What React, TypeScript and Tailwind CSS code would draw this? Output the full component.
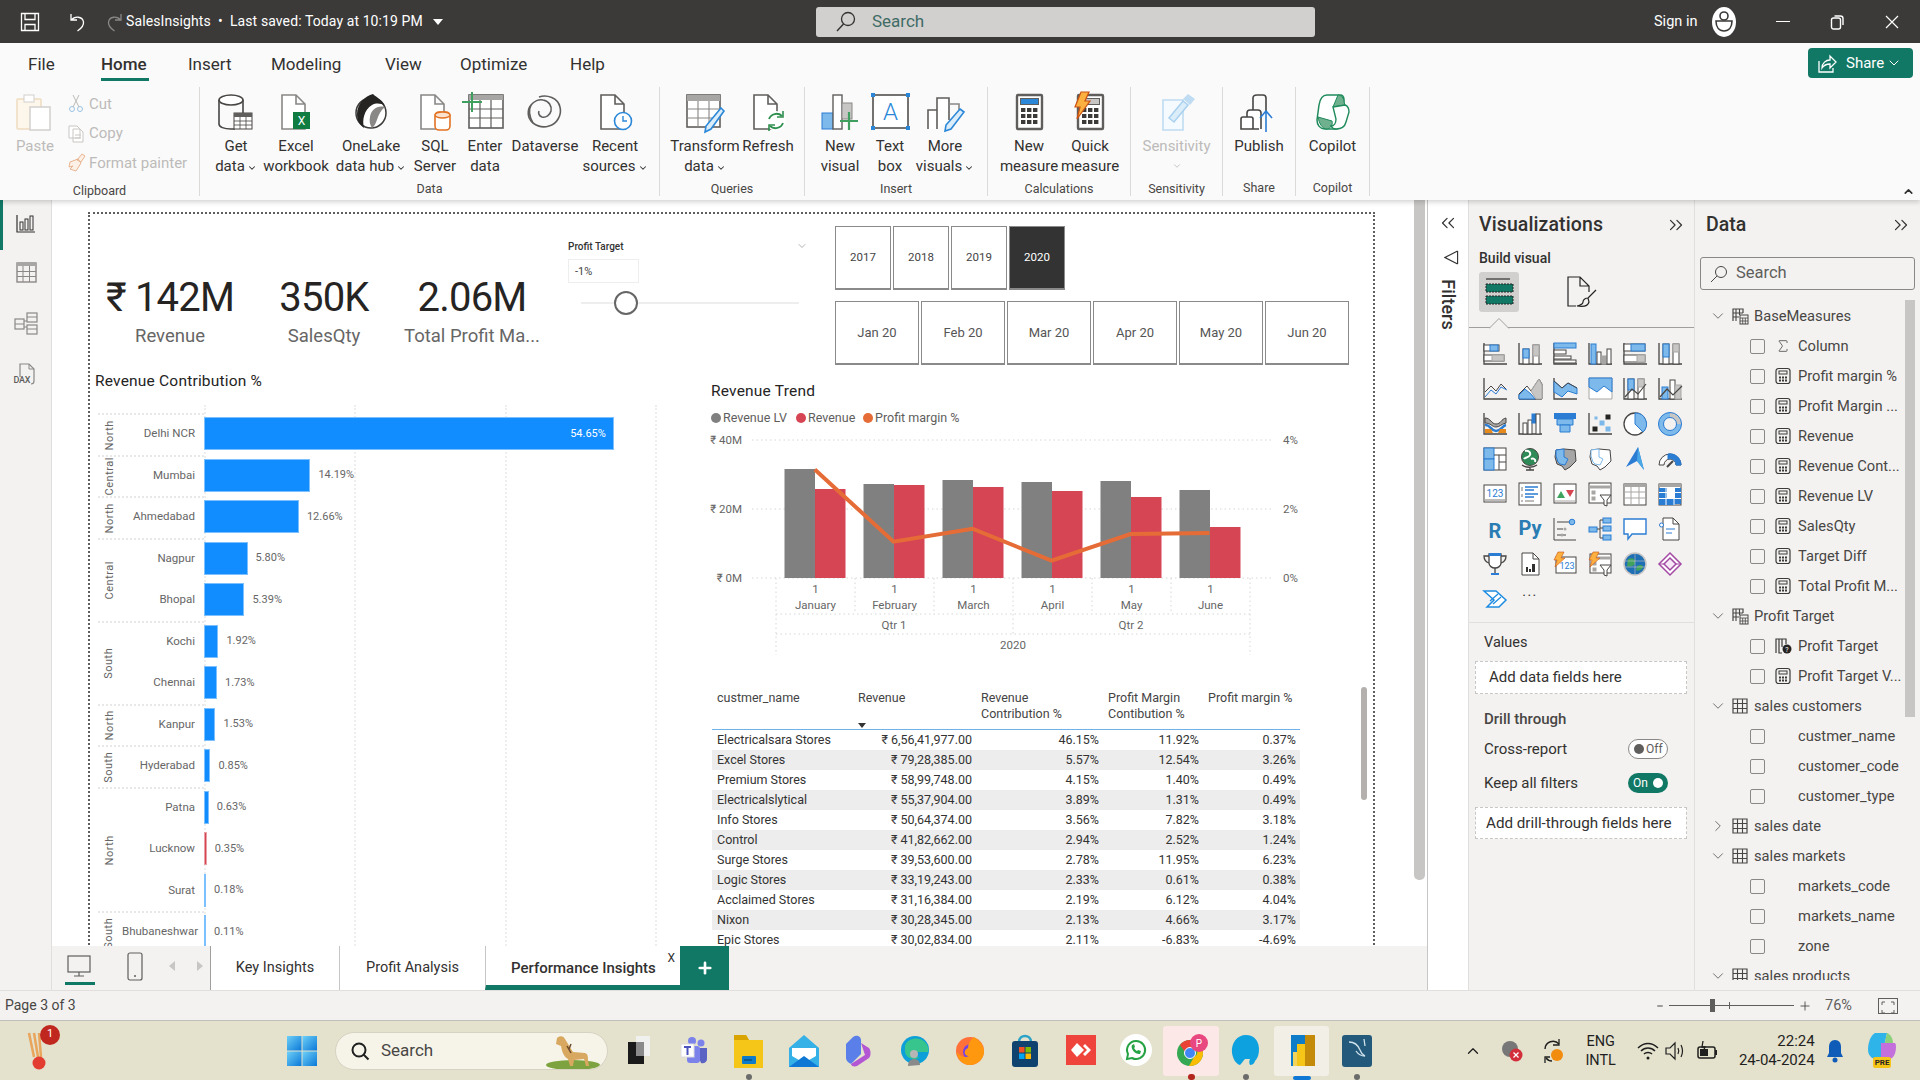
import React from 'react';
import { ChevronDown, ChevronRight, ChevronUp, ChevronsLeft, ChevronsRight, Sigma, Plus, Minus } from 'lucide-react';

const S = '#484644';
const B = '#2b7cd3';
const LB = '#7db9ea';
const G = '#a8a6a4';

const Ico = ({ s = 40, v = 40, children }: { s?: number; v?: number; children: React.ReactNode }) => (
  <svg width={s} height={s} viewBox={`0 0 ${v} ${v}`} fill="none" className="shrink-0 overflow-visible">{children}</svg>
);

const PageP = ({ c = '#605e5c', w = 1.6 }: { c?: string; w?: number }) => (
  <path d="M6 3h14l9 9v25H6zM20 3v9h9" stroke={c} strokeWidth={w} fill="#fff" />
);

const CalcI = ({ disp = '#2b88d8' }: { disp?: string }) => (
  <g>
    <rect x="8" y="3" width="25" height="34" rx="1" fill="#fff" stroke="#605e5c" strokeWidth="2.4" />
    <rect x="11.5" y="6.5" width="18" height="6" fill={disp} stroke="#605e5c" />
    {[16, 22, 28].map(y => [12, 18, 24].map(x => <rect key={`${x}${y}`} x={x} y={y} width="4.4" height="4" fill="#3b3a39" />))}
  </g>
);

const ribbonIcons: Record<string, React.ReactNode> = {
  getdata: <Ico><ellipse cx="15" cy="8" rx="12" ry="5" stroke={S} strokeWidth="1.6" fill="#fff" /><path d="M3 8v24c0 3 5 5 12 5h4" stroke={S} strokeWidth="1.6" /><path d="M27 8v13" stroke={S} strokeWidth="1.6" /><rect x="18" y="21" width="18" height="16" fill="#fff" stroke={S} /><rect x="18" y="21" width="18" height="4" fill="#605e5c" /><path d="M18 29h18M18 33h18M24 25v12M30 25v12" stroke={S} strokeWidth=".8" /></Ico>,
  excel: <Ico><PageP c="#8a8886" /><rect x="17" y="20" width="17" height="17" fill="#107c41" /><text x="25.5" y="33" fontSize="12" fill="#fff" textAnchor="middle" fontFamily="Roboto">X</text></Ico>,
  onelake: <Ico><circle cx="20" cy="21" r="15" fill="#fff" stroke="#3b3a39" strokeWidth="1.5" /><path d="M22 2c-8 2-16 10-16 20 0 7 3 11 7 14-2-8 0-18 8-23 4-2 9-2 13 1-3-7-8-8-12-12z" fill="#252423" /><path d="M34 15c-8-2-14 3-15 10-1 4 0 8 2 11 6-4 4-14 13-21z" fill="#8a8886" /></Ico>,
  sql: <Ico><PageP c="#8a8886" /><rect x="20" y="20" width="15" height="18" rx="4" fill="#fff" stroke="#e37222" strokeWidth="1.6" /><ellipse cx="27.5" cy="23" rx="7.5" ry="3" fill="#fbe2cf" stroke="#e37222" strokeWidth="1.4" /></Ico>,
  enter: <Ico><rect x="4" y="3" width="34" height="33" fill="#fff" stroke="#605e5c" strokeWidth="1.6" /><rect x="4" y="3" width="34" height="5" fill={G} /><path d="M4 17h34M4 26h34M15 8v28M26 8v28" stroke="#605e5c" strokeWidth="1.2" /><path d="M7 0v20M-3 10h20" stroke="#3f9f5f" strokeWidth="2" /></Ico>,
  dataverse: <Ico><path d="M14 5c8-3 19 1 21 10 2 8-3 17-11 19-6 2-12 0-16-3C2 26 2 18 6 13c3-4 8-6 12-5 6 1 9 6 8 11-1 4-5 7-9 6-3-1-4-4-3-6" stroke="#605e5c" strokeWidth="1.600" /><path d="M6 13c-3 6-1 13 2 18" stroke="#605e5c" strokeWidth="1.600" /></Ico>,
  recent: <Ico><PageP c="#605e5c" /><circle cx="28" cy="29" r="8.5" fill="#fff" stroke="#2b88d8" strokeWidth="1.6" /><path d="M28 24v5h4" stroke="#2b88d8" strokeWidth="1.4" /></Ico>,
  transform: <Ico><rect x="2" y="3" width="33" height="32" fill="#fff" stroke="#605e5c" strokeWidth="1.6" /><rect x="2" y="3" width="33" height="6" fill={G} /><path d="M2 17h33M2 26h33M13 9v26M24 9v26" stroke="#8a8886" strokeWidth="1.1" /><path d="M36 16l3 3-13 18-6 3 1-6z" fill="#dcedfa" stroke="#2b88d8" strokeWidth="1.6" /></Ico>,
  refresh: <Ico><PageP c="#605e5c" /><circle cx="28" cy="29" r="10" fill="#fff" /><path d="M21 27a8 8 0 0 1 13-3M35 31a8 8 0 0 1-13 3" stroke="#2f8f4e" strokeWidth="1.8" /><path d="M35 19v6h-6M21 39v-6h6" stroke="#2f8f4e" strokeWidth="1.6" /></Ico>,
  newvisual: <Ico><rect x="2" y="21" width="11" height="16" fill={LB} stroke="#2b7cd3" /><rect x="13" y="3" width="9" height="34" fill="#fff" stroke="#605e5c" strokeWidth="1.4" /><rect x="22" y="11" width="10" height="16" fill="#c8c6c4" stroke="#8a8886" /><path d="M29 20v18M20 29h18" stroke="#3f9f5f" strokeWidth="2.2" /></Ico>,
  textbox: <Ico><rect x="3" y="3" width="35" height="33" stroke="#484644" strokeWidth="1.5" fill="#fff" /><rect x="1" y="1" width="4" height="4" fill="#2b88d8" /><rect x="36" y="1" width="4" height="4" fill="#2b88d8" /><rect x="1" y="34" width="4" height="4" fill="#2b88d8" /><rect x="36" y="34" width="4" height="4" fill="#2b88d8" /><text x="20.5" y="28" fontSize="24" fill="#2b88d8" textAnchor="middle" fontFamily="Roboto" fontWeight="300">A</text></Ico>,
  more: <Ico><path d="M3 37V18h9v19M12 37V6h12v22" stroke="#605e5c" strokeWidth="1.6" fill="#fff" /><path d="M24 12h10v10" stroke="#8a8886" strokeWidth="1.6" /><path d="M35 17l4 3-13 17-6 2 1-6z" fill="#dcedfa" stroke="#2b88d8" strokeWidth="1.6" /></Ico>,
  newm: <Ico><CalcI /></Ico>,
  quickm: <Ico><CalcI disp="#c8c6c4" /><path d="M11 0h8l-4 9h5L7 27l3-12H5z" fill="#fcb040" stroke="#ca5010" strokeWidth="1.2" /></Ico>,
  sens: <Ico><path d="M6 8h20v30H6z" fill="#f4fafe" stroke="#bfdcf2" strokeWidth="1.6" /><path d="M12 26L26 9l5 4-14 17z" fill="#dbedf9" stroke="#a9d1ef" strokeWidth="1.5" /><path d="M26 7l5-5 7 5-5 6z" fill="#bfdcf2" /></Ico>,
  publish: <Ico><path d="M14 24V6c0-2 2-3 4-3h6c2 0 3 1 3 3v14" stroke="#484644" strokeWidth="1.6" /><path d="M8 37V21c0-2 1-3 3-3h8c2 0 3 1 3 3v16" stroke="#484644" strokeWidth="1.6" fill="#fff" /><path d="M2 37V27c0-1 1-2 2-2h8c1 0 2 1 2 2v10zM2 37h18" stroke="#484644" strokeWidth="1.6" fill="#fff" /><path d="M27 40V19M21 26l6-7 6 7" stroke="#2b7cd3" strokeWidth="1.6" /></Ico>,
  copilot: <Ico><path d="M14 3h13c3 0 4 2 4 5L29 30c0 4-3 7-6 7H12c-5 0-8-4-8-9l2-15c1-6 4-10 8-10z" fill="#fff" stroke="#1f8a5b" strokeWidth="1.5" /><path d="M25 3c3 0 6 3 6 7l1 3-12 2z" fill="#6fb18f" stroke="#1f8a5b" /><path d="M5 25l14 4c1 4-1 7-5 8-5 0-8-6-9-12z" fill="#6fb18f" stroke="#1f8a5b" /><path d="M20 15l12-2c3 1 4 3 4 7l-3 10c-1 4-4 7-10 7-2 0-4-1-5-3 3 0 5-3 5-7z" fill="#fff" stroke="#1f8a5b" strokeWidth="1.4" /></Ico>,
};

type RItem = { w: string; lines: string[]; chev?: boolean; icon: string; off?: boolean };
const groups: { w: string; pl: string; label: string; items: RItem[] }[] = [
  { w: 'w-[460px]', pl: 'pl-[6px]', label: 'Data', items: [
    { w: 'w-[60px]', lines: ['Get', 'data'], chev: true, icon: 'getdata' },
    { w: 'w-[60px]', lines: ['Excel', 'workbook'], icon: 'excel' },
    { w: 'w-[90px]', lines: ['OneLake', 'data hub'], chev: true, icon: 'onelake' },
    { w: 'w-[38px]', lines: ['SQL', 'Server'], icon: 'sql' },
    { w: 'w-[62px]', lines: ['Enter', 'data'], icon: 'enter' },
    { w: 'w-[58px]', lines: ['Dataverse'], icon: 'dataverse' },
    { w: 'w-[82px]', lines: ['Recent', 'sources'], chev: true, icon: 'recent' },
  ] },
  { w: 'w-[145px]', pl: 'pl-0', label: 'Queries', items: [
    { w: 'w-[90px]', lines: ['Transform', 'data'], chev: true, icon: 'transform' },
    { w: 'w-[36px]', lines: ['Refresh'], icon: 'refresh' },
  ] },
  { w: 'w-[183px]', pl: 'pl-0', label: 'Insert', items: [
    { w: 'w-[70px]', lines: ['New', 'visual'], icon: 'newvisual' },
    { w: 'w-[30px]', lines: ['Text', 'box'], icon: 'textbox' },
    { w: 'w-[80px]', lines: ['More', 'visuals'], chev: true, icon: 'more' },
  ] },
  { w: 'w-[143px]', pl: 'pl-0', label: 'Calculations', items: [
    { w: 'w-[82px]', lines: ['New', 'measure'], icon: 'newm' },
    { w: 'w-[40px]', lines: ['Quick', 'measure'], icon: 'quickm' },
  ] },
  { w: 'w-[92px]', pl: 'pl-0', label: 'Sensitivity', items: [
    { w: 'w-[92px]', lines: ['Sensitivity'], chev: true, icon: 'sens', off: true },
  ] },
  { w: 'w-[73px]', pl: 'pl-0', label: 'Share', items: [{ w: 'w-[73px]', lines: ['Publish'], icon: 'publish' }] },
  { w: 'w-[74px]', pl: 'pl-0', label: 'Copilot', items: [{ w: 'w-[74px]', lines: ['Copilot'], icon: 'copilot' }] },
];

function TitleBar() {
  return (
    <div className="h-[43px] bg-[#3b3a39] flex items-center text-white shrink-0 relative">
      <div className="ml-[20px] w-[48px]"><Ico s={20} v={20}><path d="M1.5 1.5h17v17h-17zM5 1.5v6h10v-6M5 18.5v-6h10v6" stroke="#fff" strokeWidth="1.3" /></Ico></div>
      <div className="w-[36px]"><Ico s={20} v={20}><path d="M3 2v6h6M3.5 8c3-4 11-4 12 2 .5 4-3 7-6 9" stroke="#fff" strokeWidth="1.3" /></Ico></div>
      <div className="w-[22px]"><Ico s={20} v={20}><path d="M17 2v6h-6M16.500 8c-3-4-11-4-12 2-.5 4 3 7 6 9" stroke="#8a8886" strokeWidth="1.3" /></Ico></div>
      <div className="text-[14px] tracking-[0.1px] whitespace-nowrap w-[306px]">SalesInsights&nbsp; •&nbsp; Last saved: Today at 10:19 PM</div>
      <svg width="12" height="8" viewBox="0 0 12 8"><path d="M1 1h10L6 7z" fill="#fff" /></svg>
      <div className="ml-[372px] w-[499px] h-[30px] bg-[#d2d0ce] rounded-[3px] flex items-center pl-[19px] text-[#3f6b66] text-[17px]">
        <svg width="22" height="22" viewBox="0 0 22 22" fill="none"><circle cx="13" cy="8" r="6.500" stroke="#323130" strokeWidth="1.3" /><path d="M8.500 13L2 20" stroke="#323130" strokeWidth="1.4" /></svg>
        <span className="ml-[15px]">Search</span>
      </div>
      <div className="ml-[339px] text-[14.500px] w-[58px] whitespace-nowrap">Sign in</div>
      <svg width="24" height="30" viewBox="0 0 24 30"><ellipse cx="12" cy="15" rx="12" ry="15" fill="#fff" /><circle cx="12" cy="9" r="4" fill="none" stroke="#3b3a39" strokeWidth="1.6" /><path d="M4 14h16c0 6-3 10-8 10s-8-4-8-10z" fill="none" stroke="#3b3a39" strokeWidth="1.6" /></svg>
      <div className="ml-[40px] w-[14px] h-[1.500px] bg-white" />
      <svg className="ml-[40px]" width="14" height="16" viewBox="0 0 14 16" fill="none"><rect x="1.500" y="4" width="9" height="11" rx="2" stroke="#fff" strokeWidth="1.400" /><path d="M4.500 2h6c2 0 2.500 1 2.500 2.500V11" stroke="#fff" strokeWidth="1.400" /></svg>
      <svg className="ml-[41px]" width="14" height="14" viewBox="0 0 14 14" fill="none"><path d="M1 1l12 12M13 1L1 13" stroke="#fff" strokeWidth="1.200" /></svg>
    </div>
  );
}

function Ribbon() {
  return (
    <div className="h-[157px] bg-[#fafafa] shrink-0 relative z-10 shadow-[0_2px_5px_rgba(0,0,0,0.18)] text-[#323130]">
      <div className="h-[44px] flex items-center text-[17px] relative">
        <span className="ml-[28px] w-[73px]">File</span>
        <div className="w-[87px] h-full relative flex items-center">
          <span className="font-medium">Home</span>
          <div className="absolute left-0 top-[35px] w-[48px] h-[3px] bg-[#117865]" />
        </div>
        <span className="w-[83px]">Insert</span>
        <span className="w-[114px]">Modeling</span>
        <span className="w-[75px]">View</span>
        <span className="w-[110px]">Optimize</span>
        <span>Help</span>
        <div className="absolute left-[1808px] top-[5px] w-[105px] h-[30px] rounded-[4px] bg-[#117865] text-white text-[15px] flex items-center pl-[9px]">
          <svg width="20" height="22" viewBox="0 0 20 22" fill="none"><path d="M2 9v11h14v-4" stroke="#fff" strokeWidth="1.300" /><path d="M5 16c0-5 4-8 8-8V4l6 6-6 6v-4c-4 0-6 1-8 4z" stroke="#fff" strokeWidth="1.300" /></svg>
          <span className="ml-[9px]">Share</span>
          <ChevronDown size={16} strokeWidth={1.500} className="ml-[2px]" />
        </div>
      </div>
      <div className="flex h-[110px]">
        <Group w="w-[200px]" pl="pl-0" label="Clipboard">
          <div className="w-[70px] flex flex-col items-center pt-[5px] text-[#bdbbb9] text-[15px]">
            <Ico><rect x="2" y="7" width="24" height="30" rx="1" fill="#fdf6ea" stroke="#eedcc0" strokeWidth="1.500" /><rect x="9" y="3" width="10" height="7" fill="#fff" stroke="#d2d0ce" /><rect x="15" y="15" width="20" height="23" fill="#fff" stroke="#d2d0ce" strokeWidth="1.500" /></Ico>
            <div className="h-[20px] leading-[20px] mt-[4px]">Paste</div>
          </div>
          <div className="text-[15px] text-[#bdbbb9] flex flex-col pt-[2px] -ml-[3px]">
            {[
              ['Cut', <g key="c"><circle cx="5" cy="15" r="2.500" stroke="#9cc4e4" /><circle cx="13" cy="15" r="2.500" stroke="#9cc4e4" /><path d="M6 13L12 1M12 13L6 1" stroke="#bdbbb9" /></g>],
              ['Copy', <g key="p"><path d="M2 2h8l3 3v9H2z M6 5h7l3 3v10H6z" stroke="#c8c6c4" fill="#fff" /><path d="M8 11h6M8 14h6" stroke="#c8c6c4" /></g>],
              ['Format painter', <g key="f"><path d="M10 7l5-6 3 2-4 6zM3 9l8-3 3 4-5 8c-2-1-4-1-6-2l3-3-4 1z" stroke="#e8b48f" fill="#fdf0e6" /></g>],
            ].map((r: any) => (
              <div key={r[0]} className="h-[30px] flex items-center">
                <svg width="20" height="20" viewBox="0 0 20 20" fill="none">{r[1]}</svg>
                <span className="ml-[2px] whitespace-nowrap">{r[0]}</span>
              </div>
            ))}
          </div>
        </Group>
        {groups.map(g => (
          <Group key={g.label} w={g.w} pl={g.pl} label={g.label}>
            {g.items.map(it => (
              <div key={it.lines.join()} className={`${it.w} flex flex-col items-center pt-[5px] text-[15px] ${it.off ? 'text-[#bdbbb9]' : 'text-[#323130]'}`}>
                {ribbonIcons[it.icon]}
                <div className="mt-[4px] h-[20px] leading-[20px] whitespace-nowrap flex items-center">
                  {it.lines[0]}
                </div>
                {it.lines[1] ? (
                  <div className="h-[20px] leading-[20px] whitespace-nowrap flex items-center">
                    {it.lines[1]}
                    {it.chev && <ChevronDown size={10} strokeWidth={2.500} className="ml-[2px] mt-[3px]" />}
                  </div>
                ) : it.chev ? (
                  <div className="h-[20px] flex items-center"><ChevronDown size={10} strokeWidth={2} /></div>
                ) : null}
              </div>
            ))}
          </Group>
        ))}
        <div className="flex-1 relative"><ChevronUp size={13} strokeWidth={3} className="absolute right-[5px] top-[98px] text-[#323130]" /></div>
      </div>
    </div>
  );
}

function Group({ w, pl, label, children }: { w: string; pl: string; label: string; children: React.ReactNode }) {
  return (
    <div className={`${w} h-[109px] border-r border-[#dcdad8] flex flex-col shrink-0`}>
      <div className={`flex ${pl} h-[91px]`}>{children}</div>
      <div className="text-center text-[12.500px] text-[#484644] leading-[16px] mt-[5px]">{label}</div>
    </div>
  );
}

function Rail() {
  return (
    <div className="w-[52px] shrink-0 bg-[#f3f2f1] border-r border-[#e1dfdd] flex flex-col items-center relative">
      <div className="absolute left-0 top-0 w-[3px] h-[50px] bg-[#117865]" />
      <div className="mt-[14px]"><Ico s={20} v={20}><path d="M1 1v17h18" stroke="#323130" strokeWidth="1.200" /><rect x="4" y="8" width="3" height="8" stroke="#323130" /><rect x="9" y="5" width="3" height="11" stroke="#323130" /><rect x="14" y="2" width="3" height="14" stroke="#323130" /></Ico></div>
      <div className="mt-[28px] ml-[3px]"><Ico s={22} v={22}><rect x="1" y="1" width="19" height="19" stroke="#8a8886" strokeWidth="1.400" /><rect x="1" y="1" width="19" height="3" fill="#a8a6a4" /><path d="M1 9.500h19M1 14.500h19M7 4v16M13.500 4v16" stroke="#8a8886" /></Ico></div>
      <div className="mt-[28px]"><Ico s={24} v={24}><rect x="13" y="1" width="10" height="9" stroke="#8a8886" strokeWidth="1.200" /><rect x="13" y="13" width="10" height="9" stroke="#8a8886" strokeWidth="1.200" /><rect x="1" y="7" width="9" height="10" stroke="#8a8886" strokeWidth="1.200" /><path d="M10 9h3M10 15h3M1 12h9M13 5h10M13 17h10" stroke="#8a8886" /></Ico></div>
      <div className="mt-[26px] relative w-[24px] h-[24px]">
        <Ico s={24} v={24}><path d="M6 15V2h9l5 5v12c0 2-1 3-3 3" stroke="#8a8886" strokeWidth="1.200" /><path d="M15 2v5h5" stroke="#8a8886" /></Ico>
        <span className="absolute left-0 top-[13px] text-[9px] leading-[10px] text-[#605e5c] font-medium tracking-[-0.2px]">DAX</span>
      </div>
    </div>
  );
}

const cities = [
  ['Delhi NCR', 54.65], ['Mumbai', 14.19], ['Ahmedabad', 12.66], ['Nagpur', 5.8], ['Bhopal', 5.39], ['Kochi', 1.92], ['Chennai', 1.73],
  ['Kanpur', 1.53], ['Hyderabad', 0.85], ['Patna', 0.63], ['Lucknow', 0.35], ['Surat', 0.18], ['Bhubaneshwar', 0.11],
] as [string, number][];
const zoneGroups: [string, string[]][] = [
  ['North', ['Delhi NCR']], ['Central', ['Mumbai']], ['North', ['Ahmedabad']], ['Central', ['Nagpur', 'Bhopal']], ['South', ['Kochi', 'Chennai']],
  ['North', ['Kanpur']], ['South', ['Hyderabad']], ['North', ['Patna', 'Lucknow', 'Surat']], ['South', ['Bhubaneshwar']],
];

function KPI({ w, v, l }: { w: string; v: string; l: string }) {
  return (
    <div className={`${w} shrink-0 flex flex-col items-center pt-[60px]`}>
      <div className="h-[48px] leading-[48px] text-[40px] text-[#252423] whitespace-nowrap tracking-[-0.8px]">{v}</div>
      <div className="mt-[2px] h-[24px] leading-[24px] text-[18.500px] text-[#666666] whitespace-nowrap">{l}</div>
    </div>
  );
}

function Top() {
  const yrs = ['2017', '2018', '2019', '2020'];
  const ms = ['Jan 20', 'Feb 20', 'Mar 20', 'Apr 20', 'May 20', 'Jun 20'];
  return (
    <div className="flex h-[155px] pl-[5px]">
      <KPI w="w-[150px]" v="₹ 142M" l="Revenue" />
      <KPI w="w-[158px]" v="350K" l="SalesQty" />
      <KPI w="w-[138px]" v="2.06M" l="Total Profit Ma..." />
      <div className="ml-[27px] w-[240px] shrink-0 pt-[25px]">
        <div className="flex items-center justify-between h-[14px] text-[10px] font-medium text-[#333]">
          <span>Profit Target</span>
          <ChevronDown size={12} strokeWidth={1} className="text-[#666]" />
        </div>
        <div className="mt-[6px] w-[71px] h-[24px] border border-[#eeeeee] text-[11px] leading-[24px] pl-[6px] text-[#444]">-1%</div>
        <div className="mt-[8px] ml-[13px] flex items-center h-[24px]">
          <div className="w-[33px] h-[2px] bg-[#eeeeee]" />
          <div className="w-[24px] h-[24px] rounded-full border-2 border-[#666] bg-white shrink-0" />
          <div className="w-[161px] h-[2px] bg-[#eeeeee]" />
        </div>
      </div>
      <div className="ml-[27px] pt-[12px] shrink-0">
        <div className="flex gap-[2px]">
          {yrs.map(y => (
            <div key={y} className={`w-[56px] h-[64px] flex items-center justify-center text-[11.500px] border border-b-2 border-[#8a8a8a] ${y === '2020' ? 'bg-[#333333] text-white' : 'bg-white text-[#444]'}`}>{y}</div>
          ))}
        </div>
        <div className="flex gap-[2px] mt-[11px]">
          {ms.map(m => (
            <div key={m} className="w-[84px] h-[64px] flex items-center justify-center text-[13px] text-[#555] border border-b-2 border-[#8a8a8a]">{m}</div>
          ))}
        </div>
      </div>
    </div>
  );
}

function RevenueContribution() {
  return (
    <div className="w-[621px] shrink-0">
      <div className="ml-[5px] mt-[2px] h-[20px] leading-[20px] text-[15.500px] text-[#252423] tracking-[0.2px]">Revenue Contribution %</div>
      <div className="mt-[22px] ml-[8px] flex">
        <div className="w-[106px] shrink-0">
          {zoneGroups.map((g, i) => (
            <div key={i} className="flex border-t-2 border-dotted border-[#e8e8e8]" style={{ height: g[1].length * 41.5 }}>
              <div className="w-[24px] shrink-0 flex items-center justify-center">
                <span className="-rotate-90 text-[11px] text-[#666] tracking-[0.5px] whitespace-nowrap">{g[0]}</span>
              </div>
              <div className="flex-1 flex flex-col -mt-[2px]">
                {g[1].map(c => <div key={c} className="h-[41.500px] flex items-center justify-end pr-[9px] text-[11.500px] text-[#666] whitespace-nowrap">{c}</div>)}
              </div>
            </div>
          ))}
        </div>
        <div className="flex-1 relative">
          <div className="absolute left-0 -top-[8px] bottom-[-40px] border-l-2 border-dotted border-[#eeeeee]" />
          <div className="absolute left-[150px] -top-[8px] bottom-[-40px] border-l-2 border-dotted border-[#eeeeee]" />
          <div className="absolute left-[301px] -top-[8px] bottom-[-40px] border-l-2 border-dotted border-[#eeeeee]" />
          <div className="absolute left-[451px] -top-[8px] bottom-[-40px] border-l-2 border-dotted border-[#eeeeee]" />
          {cities.map(([c, p]) => (
            <div key={c} className="h-[41.500px] flex items-center relative">
              <div className={`h-[33px] flex items-center justify-end border ${c === 'Lucknow' ? 'bg-[#d64550] border-[#e8a0a6]' : 'bg-[#118dff] border-[#7cc0ff]'}`} style={{ width: Math.max(p * 7.5, 1.5) }}>
                {p > 50 && <span className="text-[11px] text-white mr-[7px]">{p.toFixed(2)}%</span>}
              </div>
              {p < 50 && <span className="ml-[8px] text-[11px] text-[#666]">{p.toFixed(2)}%</span>}
            </div>
          ))}
        </div>
      </div>
    </div>
  );
}

function TrendChart() {
  const months = ['January', 'February', 'March', 'April', 'May', 'June'];
  const gray = [469, 484, 480, 482, 481, 490];
  const red = [489, 485, 487, 491, 497, 527];
  const T = { fontSize: 11.5, fill: '#666', fontFamily: 'Roboto' };
  const dot = { stroke: '#d6d6d6', strokeWidth: 1, strokeDasharray: '1.500 3' };
  return (
    <svg className="-ml-[11px] mt-[4px] block" width="620" height="240" viewBox="700 430 620 240" fill="none">
      {[440, 509, 578].map(y => <path key={y} d={`M752 ${y}H1274`} {...dot} />)}
      <text x="742" y="444" textAnchor="end" {...T}>₹ 40M</text>
      <text x="742" y="513" textAnchor="end" {...T}>₹ 20M</text>
      <text x="742" y="582" textAnchor="end" {...T}>₹ 0M</text>
      <text x="1283" y="444" {...T}>4%</text>
      <text x="1283" y="513" {...T}>2%</text>
      <text x="1283" y="582" {...T}>0%</text>
      {months.map((m, i) => {
        const x = 784.5 + i * 79;
        return (
          <g key={m}>
            <rect x={x} y={gray[i]} width="30.500" height={578 - gray[i]} fill="#808080" />
            <rect x={x + 30.5} y={red[i]} width="30.500" height={578 - red[i]} fill="#d64554" />
            <text x={x + 31} y="593" textAnchor="middle" {...T}>1</text>
            <text x={x + 31} y="609" textAnchor="middle" {...T}>{m}</text>
          </g>
        );
      })}
      <path d="M814.800 469.500L893.500 541.700L972.500 528.700L1051.500 560.700L1130.500 534L1209.500 533" stroke="#e66c37" strokeWidth="4" />
      {[776, 855, 934, 1013, 1092, 1171, 1250].map(x => <path key={x} d={`M${x} 578V${x === 776 || x === 1250 ? 655 : x === 1013 ? 634 : 614}`} {...dot} />)}
      <path d="M776 614H1250M776 634H1250" {...dot} />
      <text x="894" y="629" textAnchor="middle" {...T}>Qtr 1</text>
      <text x="1131" y="629" textAnchor="middle" {...T}>Qtr 2</text>
      <text x="1013" y="649" textAnchor="middle" {...T}>2020</text>
    </svg>
  );
}

const rows = [
  ['Electricalsara Stores', '₹ 6,56,41,977.00', '46.15%', '11.92%', '0.37%'],
  ['Excel Stores', '₹ 79,28,385.00', '5.57%', '12.54%', '3.26%'],
  ['Premium Stores', '₹ 58,99,748.00', '4.15%', '1.40%', '0.49%'],
  ['Electricalslytical', '₹ 55,37,904.00', '3.89%', '1.31%', '0.49%'],
  ['Info Stores', '₹ 50,64,374.00', '3.56%', '7.82%', '3.18%'],
  ['Control', '₹ 41,82,662.00', '2.94%', '2.52%', '1.24%'],
  ['Surge Stores', '₹ 39,53,600.00', '2.78%', '11.95%', '6.23%'],
  ['Logic Stores', '₹ 33,19,243.00', '2.33%', '0.61%', '0.38%'],
  ['Acclaimed Stores', '₹ 31,16,384.00', '2.19%', '6.12%', '4.04%'],
  ['Nixon', '₹ 30,28,345.00', '2.13%', '4.66%', '3.17%'],
  ['Epic Stores', '₹ 30,02,834.00', '2.11%', '-6.83%', '-4.69%'],
];

function Table() {
  return (
    <div className="mt-[20px] ml-[1px] w-[588px] text-[12.500px] text-[#333]">
      <div className="flex h-[40px] border-b border-[#6fb1e9] leading-[16px] text-[#444]">
        <div className="w-[141px] pl-[5px]">custmer_name</div>
        <div className="w-[123px] pl-[5px]">Revenue
          <svg className="mt-[17px]" width="8" height="5" viewBox="0 0 8 5"><path d="M0 0h8L4 5z" fill="#333" /></svg>
        </div>
        <div className="w-[127px] pl-[5px]">Revenue<br />Contribution %</div>
        <div className="w-[100px] pl-[5px] whitespace-nowrap">Profit Margin<br />Contibution %</div>
        <div className="w-[97px] pl-[5px] whitespace-nowrap">Profit margin %</div>
      </div>
      {rows.map((r, i) => (
        <div key={r[0]} className={`flex h-[20px] leading-[20px] ${i % 2 ? 'bg-[#ededed]' : 'bg-white'}`}>
          <div className="w-[141px] pl-[5px] whitespace-nowrap">{r[0]}</div>
          <div className="w-[123px] pr-[4px] text-right">{r[1]}</div>
          <div className="w-[127px] pr-[4px] text-right">{r[2]}</div>
          <div className="w-[100px] pr-[4px] text-right">{r[3]}</div>
          <div className="w-[97px] pr-[4px] text-right">{r[4]}</div>
        </div>
      ))}
    </div>
  );
}

function RevenueTrend() {
  return (
    <div className="flex-1 relative">
      <div className="mt-[12px] h-[20px] leading-[20px] text-[15.500px] text-[#252423] tracking-[0.2px]">Revenue Trend</div>
      <div className="mt-[9px] h-[16px] flex items-center text-[12.500px] text-[#605e5c] whitespace-nowrap">
        <span className="w-[10px] h-[10px] rounded-full bg-[#808080]" /><span className="ml-[2px] w-[73px]">Revenue LV</span>
        <span className="w-[10px] h-[10px] rounded-full bg-[#d64554]" /><span className="ml-[2px] w-[55px]">Revenue</span>
        <span className="w-[10px] h-[10px] rounded-full bg-[#e66c37]" /><span className="ml-[2px]">Profit margin %</span>
      </div>
      <TrendChart />
      <Table />
      <div className="absolute left-[650px] top-[318px] w-[6px] h-[113px] rounded-[3px] bg-[#b3b0ad]" />
    </div>
  );
}

function Canvas() {
  return (
    <div className="h-[746px] overflow-hidden relative bg-white pl-[36px] pt-[12px]">
      <div className="w-[1287px] h-[900px] border-2 border-dotted border-[#605e5c] bg-white">
        <Top />
        <div className="flex">
          <RevenueContribution />
          <RevenueTrend />
        </div>
      </div>
      <div className="absolute right-[2px] top-0 w-[11px] h-[680px] rounded-b-[5px] bg-[#c8c6c4]" />
    </div>
  );
}

function Tabs() {
  return (
    <div className="h-[44px] bg-[#f3f2f1] flex items-stretch text-[14.500px] shrink-0 text-[#323130]">
      <div className="w-[159px] flex items-start relative border-r border-[#a19f9d]">
        <div className="ml-[15px] mt-[8px] relative">
          <Ico s={24} v={24}><rect x="1" y="2" width="22" height="16" stroke="#605e5c" strokeWidth="1.200" fill="#f3f2f1" /><path d="M12 18v4M7 22h10" stroke="#605e5c" strokeWidth="1.200" /></Ico>
        </div>
        <div className="absolute left-[13px] top-[36px] w-[30px] h-[3px] bg-[#117865]" />
        <svg className="ml-[36px] mt-[6px] shrink-0" width="16" height="29" viewBox="0 0 16 29" fill="none"><rect x="1" y="1" width="14" height="27" rx="2" stroke="#605e5c" strokeWidth="1.200" /><circle cx="8" cy="24" r="1" fill="#605e5c" /></svg>
        <svg className="ml-[26px] mt-[15px]" width="6" height="10" viewBox="0 0 6 10"><path d="M6 0v10L0 5z" fill="#c8c6c4" /></svg>
        <svg className="ml-[22px] mt-[15px]" width="6" height="10" viewBox="0 0 6 10"><path d="M0 0v10l6-5z" fill="#c8c6c4" /></svg>
      </div>
      <div className="w-[129px] bg-white border-r border-[#c8c6c4] flex items-center justify-center">Key Insights</div>
      <div className="w-[145px] bg-white flex items-center justify-center">Profit Analysis</div>
      <div className="w-[195px] bg-white border-b-[5px] border-[#117865] border-l border-l-[#c8c6c4] flex items-center relative pl-[25px] pt-[5px] font-medium text-[15px] whitespace-nowrap">
        Performance Insights
        <span className="absolute right-[5px] top-[3px] text-[12px] font-normal">X</span>
      </div>
      <div className="w-[49px] bg-[#117865] flex items-center justify-center text-white"><Plus size={18} strokeWidth={3.500} /></div>
    </div>
  );
}

function Filters() {
  return (
    <div className="w-[41px] shrink-0 bg-white border-l border-[#c8c6c4] flex flex-col items-center relative">
      <ChevronsLeft size={22} strokeWidth={1.300} className="mt-[12px] text-[#323130]" />
      <svg className="mt-[16px] ml-[6px]" width="15" height="15" viewBox="0 0 16 16" fill="none"><path d="M14.500 1v14M14.500 1L1 8l13.500 7" stroke="#323130" strokeWidth="1.200" /></svg>
      <div className="mt-[12px] h-[54px] text-[18px] font-medium text-[#323130] flex items-center justify-center">
        <span className="rotate-90 inline-block">Filters</span>
      </div>
    </div>
  );
}

const Axis = () => <path d="M1 1v21h23" stroke={S} strokeWidth="1.300" />;
const R = (x: number, y: number, w: number, h: number, f = '#fff', st = S) => <rect x={x} y={y} width={w} height={h} fill={f} stroke={st} strokeWidth="1" />;

const vizIcons: React.ReactNode[] = [
  <><Axis />{R(1, 3, 15, 6)}{R(7, 3, 8, 6, LB, B)}{R(1, 13, 20, 6)}{R(9, 13, 12, 6, '#c8c6c4', G)}</>,
  <><Axis />{R(5, 7, 6, 15)}{R(5, 7, 6, 9, LB, B)}{R(15, 3, 6, 19)}{R(15, 3, 6, 11, '#c8c6c4', G)}</>,
  <><Axis />{R(1, 1, 22, 5, LB, B)}{R(1, 8, 12, 4)}{R(1, 14, 17, 3)}{R(1, 18, 22, 3)}</>,
  <><Axis />{R(3, 2, 5, 20, LB, B)}{R(9, 10, 4, 12, '#fff')}{R(14, 14, 4, 8, G, G)}{R(19, 7, 4, 15)}</>,
  <><Axis />{R(1, 2, 21, 7)}{R(8, 2, 14, 7, LB, B)}{R(1, 13, 21, 7)}{R(14, 13, 8, 7, '#c8c6c4', G)}</>,
  <><Axis />{R(5, 2, 6, 20)}{R(5, 2, 6, 13, LB, B)}{R(15, 2, 6, 20)}{R(15, 2, 6, 8, '#c8c6c4', G)}</>,
  <><Axis /><path d="M2 15l6-6 5 5 5-7 5 5" stroke={S} /><path d="M2 20l6-7 5 4 5-7 6 3" stroke={B} /></>,
  <><path d="M1 22h23" stroke={S} strokeWidth="1.300" /><path d="M1 22V17L9 9l4 5 8-12 3 5v15z" fill="#fff" stroke={S} /><path d="M13 14l8-12 3 6v14h-6z" fill="#c8c6c4" stroke={G} /><path d="M1 22v-4l6-6 6 5 4 5z" fill={LB} stroke={B} /></>,
  <><Axis /><path d="M1 4l8 7 6-5 9 5v6l-9-3-6 6-8-5z" fill={LB} stroke={B} /><path d="M1 4l8 7 6-5 9 5" stroke={S} /></>,
  <><path d="M1 1h23v21H1z" fill="#fff" stroke={G} /><path d="M1 1h23v14l-8-6-7 6-8-5z" fill={LB} stroke={B} /></>,
  <><Axis />{R(5, 2, 6, 20)}{R(5, 2, 6, 11, LB, B)}{R(15, 2, 6, 20)}{R(15, 2, 6, 8, '#c8c6c4', G)}<path d="M2 20l7-8 6 5 8-10" stroke={S} strokeWidth="1.200" /></>,
  <><Axis />{R(4, 10, 6, 12, LB, B)}{R(12, 3, 5, 19)}{R(17, 8, 6, 14, '#c8c6c4', G)}<path d="M2 20l7-8 6 6 9-9" stroke={S} strokeWidth="1.200" /></>,
  <><Axis /><path d="M2 6c6 0 6 6 11 6s5-5 10-6v5c-5 1-6 4-10 4S8 11 2 11z" fill={G} stroke={S} /><path d="M2 13c5-1 6 6 11 6s6-5 10-6" stroke={B} strokeWidth="2.500" /><path d="M2 17h6l2 4H2zM17 17h6v4h-8z" fill="#e8891c" /></>,
  <><Axis />{R(5, 11, 4, 11)}{R(10, 8, 4, 14)}{R(14, 2, 4, 9, B, B)}{R(18, 2, 4, 20)}</>,
  <><path d="M1 1h22v6H1z" fill={B} /><path d="M4 7h16v6H4z" fill={LB} stroke={B} /><path d="M7 13h10v7H7z" fill={LB} stroke={B} /></>,
  <><Axis />{R(5, 15, 4, 4, '#252423', '#252423')}{R(12, 9, 4, 4, LB, LB)}{R(18, 3, 4, 4, '#252423', '#252423')}{R(18, 15, 4, 4, LB, LB)}{R(7, 5, 2, 2, LB, LB)}</>,
  <><circle cx="12" cy="12" r="11" fill="#fff" stroke={S} strokeWidth="1.300" /><path d="M12 12V1a11 11 0 0 1 8 19z" fill={LB} stroke={B} /></>,
  <><circle cx="12" cy="12" r="9" stroke={LB} strokeWidth="5" /><path d="M12 3a9 9 0 0 1 9 9" stroke="#c8c6c4" strokeWidth="5" /><circle cx="12" cy="12" r="11.500" stroke={B} /><circle cx="12" cy="12" r="6.500" stroke={B} /></>,
  <>{R(1, 1, 22, 22)}{R(1, 1, 10, 11, LB, B)}{R(1, 12, 10, 11, LB, B)}<path d="M11 8h12M16 8v15M16 15h7" stroke={S} /></>,
  <><circle cx="12" cy="10" r="8.500" fill="#2e8b57" stroke={S} /><path d="M7 4c3-1 6 1 5 4s-5 2-6 4M13 12c2-1 5 0 4 3" stroke="#fff" strokeWidth="2" /><path d="M4 18c4 3 11 3 15 0M12 20v3M8 23h8" stroke={S} strokeWidth="1.300" /></>,
  <><path d="M3 3l8-1 11 1 1 11-6 6-5 3-3-4-5-2-2-7z" fill="#a6a6a6" stroke={S} /><path d="M3 3l8-1v8l4 2-3 6-5-1-2-2-2-6z" fill={LB} stroke={B} /></>,
  <><path d="M3 3l8-1 11 1 1 11-6 6-5 3-3-4-5-2-2-7z" fill="#fff" stroke={S} /><path d="M3 3l8-1v8l4 2-3 6-5-1-2-2-2-6z" fill="#fff" stroke={LB} /></>,
  <><path d="M15 0L3 20l11-6 7 9z" fill={B} /><path d="M15 0l-1 14 7 9z" fill="#4aa8e6" /></>,
  <><path d="M1 18A11 11 0 0 1 23 18h-5a6 6 0 0 0-12 0z" fill="#fff" stroke={S} /><path d="M10 7a11 11 0 0 1 13 11h-5a6 6 0 0 0-8-6z" fill={B} stroke={B} /><path d="M9 20l6-6" stroke={S} strokeWidth="2" /></>,
  <><rect x="1" y="3" width="22" height="17" fill="#fff" stroke={S} /><path d="M2 18h20" stroke={G} strokeWidth="1.500" /><text x="12" y="15" fontSize="10" textAnchor="middle" fill={B} fontFamily="Roboto">123</text></>,
  <>{R(1, 1, 22, 22)}<path d="M4 5v4M4 12v3M4 18v2" stroke={G} strokeWidth="1.500" /><path d="M7 5h13M7 8h9M7 12h13M7 15h9" stroke={B} strokeWidth="1.500" /><path d="M7 19h9" stroke={G} strokeWidth="1.500" /></>,
  <>{R(1, 2, 22, 19)}<path d="M4 16l4-7 4 7z" fill="#3fa35e" /><path d="M13 8h8l-4 7z" fill="#d64550" /><path d="M2 19h20" stroke={G} /></>,
  <>{R(1, 1, 22, 20)}<path d="M1 5h22" stroke={G} strokeWidth="3" />{R(4, 9, 3, 3, G, G)}{R(4, 15, 3, 3, G, G)}<path d="M12 13h11l-4 5v6l-3-1v-5z" fill="#fff" stroke={S} /></>,
  <>{R(1, 2, 22, 21)}<path d="M1 3.500h22" stroke={G} strokeWidth="3" /><path d="M1 10h22M1 16h22M8 5v18M16 5v18" stroke={G} /></>,
  <>{R(1, 2, 22, 21)}<path d="M1 3.500h22" stroke={G} strokeWidth="3" /><path d="M1 6h8v11H1zM17 6h6v16h-6zM1 17h16v6H1z" fill={B} /><path d="M1 10.500h22M1 16.500h22M8 5v18M16 5v18" stroke="#fff" /></>,
  <text x="12" y="21" fontSize="20" fontWeight="700" fill="#2b7cb3" textAnchor="middle" fontFamily="Roboto">R</text>,
  <text x="12" y="18" fontSize="20" fontWeight="700" fill="#2b7cb3" textAnchor="middle" fontFamily="Roboto">Py</text>,
  <><path d="M1 1v22h22M4 5h13M4 12h6M4 18h9" stroke={S} /><circle cx="19" cy="5" r="2.800" fill={LB} stroke={B} /><circle cx="12" cy="12" r="1.500" fill={G} /><circle cx="9" cy="18" r="1.500" fill={G} /></>,
  <><rect x="1" y="10" width="8" height="5" fill={LB} stroke={B} />{R(15, 1, 8, 5, LB, B)}{R(15, 9, 8, 5, LB, B)}{R(15, 18, 8, 5, LB, B)}<path d="M9 12h3M12 3v18M12 3h3M12 11h3M12 21h3" stroke={S} /></>,
  <path d="M1 2h22v15H9l-4 5v-5H1z" fill="#fff" stroke={B} strokeWidth="1.400" />,
  <><path d="M5 1h10l6 6v16H5z" fill="#fff" stroke={S} /><path d="M15 1v6h6" stroke={S} /><circle cx="3.500" cy="8" r="2" fill="#fff" stroke={B} /><path d="M8 12h9M8 16h6" stroke={B} /></>,
  <><path d="M6 2h12v9c0 3-3 5-6 5s-6-2-6-5z" fill="#fff" stroke={S} strokeWidth="1.300" /><path d="M6 1h12v3H6zM8 21h8v2H8z" fill={B} /><path d="M6 4H1c0 4 2 6 5 7M18 4h5c0 4-2 6-5 7M12 16v5" stroke={S} strokeWidth="1.300" /></>,
  <><path d="M4 1h11l6 6v16H4z" fill="#fff" stroke={S} /><path d="M15 1v6h6" stroke={S} /><path d="M8 20v-5h2v5zM11 20v-3h2v3zM14 20v-8h3v8z" fill="#323130" /></>,
  <><rect x="3" y="5" width="20" height="16" fill="#fff" stroke={S} /><text x="14" y="17" fontSize="9" textAnchor="middle" fill={B} fontFamily="Roboto">123</text><path d="M5 0h6L8 6h4L2 15l2-7H1z" fill="#fcb040" stroke="#ca5010" strokeWidth=".6" /></>,
  <>{R(2, 2, 21, 19)}<path d="M2 6h21" stroke={G} strokeWidth="3" />{R(5, 10, 3, 3, G, G)}{R(5, 16, 3, 3, G, G)}<path d="M12 13h11l-4 5v6l-3-1v-5z" fill="#fff" stroke={S} /><path d="M5 0h6L8 6h4L2 15l2-7H1z" fill="#fcb040" stroke="#ca5010" strokeWidth=".6" /></>,
  <><circle cx="12" cy="12" r="11" fill="#1f6fb5" stroke="#c8c6c4" strokeWidth="1.500" /><path d="M5 7c4-2 8 0 7 4s-6 4-8 3zM14 14c3-2 6-1 6 1s-5 5-7 3z" fill="#3fa35e" /><path d="M2 9h20M2 15h20M12 1v22" stroke="#c8c6c4" strokeWidth=".6" /></>,
  <><path d="M12 1l11 11-11 11L1 12z" stroke="#a349a4" strokeWidth="1.500" fill="#fff" /><path d="M12 6l6 6-6 6-6-6z" stroke="#a349a4" strokeWidth="1.500" fill="#f6e8f6" /><path d="M1 12h5M18 12h5" stroke="#a349a4" /></>,
  <><path d="M1 4h12l10 9-7 7H4l7-7z" fill="#fff" stroke="#1f8ce0" strokeWidth="1.500" /><path d="M7 14l8-7M10 17l8-7" stroke="#1f8ce0" strokeWidth="1.300" /></>,
  <text x="12" y="14" fontSize="14" fill="#323130" textAnchor="middle" fontFamily="Roboto" letterSpacing="1.500">···</text>,
];

function Toggle({ on }: { on?: boolean }) {
  return on ? (
    <div className="w-[40px] h-[20px] rounded-full bg-[#117865] text-white text-[12px] flex items-center pl-[5px] relative">On<span className="absolute right-[5px] top-[5px] w-[10px] h-[10px] bg-white rounded-full" /></div>
  ) : (
    <div className="w-[40px] h-[20px] rounded-full border border-[#8a8886] bg-white text-[#605e5c] text-[12px] flex items-center pl-[5px]"><span className="w-[10px] h-[10px] rounded-full bg-[#605e5c] mr-[2px]" />Off</div>
  );
}

function Viz() {
  return (
    <div className="w-[227px] shrink-0 bg-[#f3f2f1] border-l border-r border-[#e1dfdd] relative text-[#323130]">
      <div className="mt-[12px] ml-[10px] h-[26px] flex items-center justify-between pr-[7px]">
        <span className="text-[19.500px] font-medium tracking-[0.1px]">Visualizations</span>
        <ChevronsRight size={22} strokeWidth={1.300} />
      </div>
      <div className="mt-[11px] ml-[10px] h-[18px] leading-[18px] text-[14px] font-medium">Build visual</div>
      <div className="mt-[5px] ml-[10px] flex items-center">
        <div className="w-[40px] h-[40px] rounded-[3px] bg-[#d2d0ce] flex items-center justify-center">
          <Ico s={30} v={30}><path d="M2 2h24" stroke="#323130" strokeWidth="1.200" /><rect x="2" y="7" width="27" height="8" fill="#117865" stroke="#252423" strokeDasharray="2 1" /><rect x="2" y="19" width="27" height="8" fill="#117865" stroke="#252423" strokeDasharray="2 1" /></Ico>
        </div>
        <div className="ml-[47px]"><Ico s={32} v={32}><path d="M10 30H2V1h12l9 9v6M14 1v9h9" stroke="#252423" strokeWidth="1.200" /><path d="M22 22L30 14M22 22c-3 0-5 2-5 4 0 2-2 3-6 4 6 1 11 0 12-4z" stroke="#252423" strokeWidth="1.200" /></Ico></div>
      </div>
      <div className="mt-[15px] border-t border-[#a19f9d] relative">
        <svg className="absolute left-[20px] -top-[10px]" width="22" height="11" viewBox="0 0 22 11" fill="none"><path d="M0 10.500L10 .5l10 10" stroke="#a19f9d" fill="#f3f2f1" /></svg>
      </div>
      <div className="mt-[8px] ml-[8px] grid grid-cols-[repeat(6,35px)] auto-rows-[35px]">
        {vizIcons.map((ic, i) => <div key={i} className="flex items-center justify-center"><Ico s={24} v={24}>{ic}</Ico></div>)}
      </div>
      <div className="mt-[6px] border-t border-[#e1dfdd]" />
      <div className="mt-[10px] ml-[15px] h-[20px] leading-[20px] text-[14.500px]">Values</div>
      <div className="mt-[8px] ml-[6px] w-[212px] h-[33px] bg-white border border-dashed border-[#c8c6c4] text-[15px] leading-[31px] pl-[13px]">Add data fields here</div>
      <div className="mt-[15px] ml-[15px] h-[20px] leading-[20px] text-[15px] font-medium text-[#484644]">Drill through</div>
      <div className="mt-[10px] ml-[15px] w-[184px] flex items-center justify-between h-[20px] text-[15px]"><span>Cross-report</span><Toggle /></div>
      <div className="mt-[14px] ml-[15px] w-[184px] flex items-center justify-between h-[20px] text-[15px]"><span>Keep all filters</span><Toggle on /></div>
      <div className="mt-[14px] ml-[6px] w-[212px] h-[32px] bg-white border border-dashed border-[#c8c6c4] text-[15.200px] leading-[30px] pl-[10px] whitespace-nowrap">Add drill-through fields here</div>
    </div>
  );
}

const TableIco = ({ calc }: { calc?: boolean }) => (
  <Ico s={18} v={18}>
    <path d={calc ? 'M2 14V2h10v4' : 'M2 2h14v14H2z'} stroke="#484644" strokeWidth="1.200" />
    <path d={calc ? 'M2 6h10M2 10h6M5 2v12M8.500 2v6' : 'M2 6.500h14M2 11.500h14M6.500 2v14M11.500 2v14'} stroke="#484644" strokeWidth="1.100" />
    {calc && <><rect x="9" y="8" width="8" height="9" fill="#f3f2f1" stroke="#484644" /><path d="M9 11h8M9 14h8M11.700 11v6M14.300 11v6" stroke="#484644" strokeWidth=".8" /></>}
  </Ico>
);
const CalcSmall = () => (
  <Ico s={16} v={16}>
    <rect x="1" y="0.500" width="14" height="15" rx="2.500" stroke="#3b3a39" strokeWidth="1.200" fill="#f3f2f1" />
    <rect x="4" y="3" width="8" height="3" stroke="#3b3a39" />
    {[8.5, 11.5].map(y => [4, 7, 10].map(x => <rect key={`${x}${y}`} x={x} y={y} width="2" height="2" fill="#3b3a39" />))}
  </Ico>
);

type Node = { t: string; k: 'g' | 'gc' | 'gr' | 'c' | 'n' | 'sig' | 'q' };
const nodes: Node[] = [
  { t: 'BaseMeasures', k: 'gc' }, { t: 'Column', k: 'sig' }, { t: 'Profit margin %', k: 'c' }, { t: 'Profit Margin ...', k: 'c' }, { t: 'Revenue', k: 'c' }, { t: 'Revenue Cont...', k: 'c' }, { t: 'Revenue LV', k: 'c' }, { t: 'SalesQty', k: 'c' }, { t: 'Target Diff', k: 'c' }, { t: 'Total Profit M...', k: 'c' },
  { t: 'Profit Target', k: 'gc' }, { t: 'Profit Target', k: 'q' }, { t: 'Profit Target V...', k: 'c' },
  { t: 'sales customers', k: 'g' }, { t: 'custmer_name', k: 'n' }, { t: 'customer_code', k: 'n' }, { t: 'customer_type', k: 'n' },
  { t: 'sales date', k: 'gr' }, { t: 'sales markets', k: 'g' }, { t: 'markets_code', k: 'n' }, { t: 'markets_name', k: 'n' }, { t: 'zone', k: 'n' }, { t: 'sales products', k: 'g' },
];

function DataPane() {
  return (
    <div className="flex-1 bg-[#f3f2f1] relative text-[#484644]">
      <div className="mt-[12px] ml-[11px] h-[26px] flex items-center justify-between pr-[8px]">
        <span className="text-[19.500px] font-medium text-[#323130]">Data</span>
        <ChevronsRight size={22} strokeWidth={1.300} className="text-[#323130]" />
      </div>
      <div className="mt-[19px] ml-[5px] w-[215px] h-[33px] border border-[#8a8886] rounded-[3px] flex items-center pl-[9px] text-[16.500px] text-[#605e5c]">
        <svg width="18" height="18" viewBox="0 0 18 18" fill="none"><circle cx="11" cy="7" r="5.500" stroke="#484644" /><path d="M7 11l-6 6" stroke="#484644" /></svg>
        <span className="ml-[8px]">Search</span>
      </div>
      <div className="mt-[11px] h-[679px] overflow-hidden text-[14.700px]">
        {nodes.map((n, i) => {
          const isG = n.k === 'g' || n.k === 'gc' || n.k === 'gr';
          return isG ? (
            <div key={i} className="h-[30px] flex items-center pl-[14px]">
              {n.k === 'gr' ? <ChevronRight size={18} strokeWidth={1} /> : <ChevronDown size={18} strokeWidth={1} />}
              <div className="ml-[4px]"><TableIco calc={n.k === 'gc'} /></div>
              <span className="ml-[5px] whitespace-nowrap">{n.t}</span>
            </div>
          ) : (
            <div key={i} className="h-[30px] flex items-center pl-[55px]">
              <div className="w-[15px] h-[15px] rounded-[2px] border border-[#8a8886] bg-[#f3f2f1] shrink-0" />
              <div className="ml-[10px] w-[16px] h-[16px] flex items-center justify-center">
                {n.k === 'c' && <CalcSmall />}
                {n.k === 'sig' && <Sigma size={16} strokeWidth={1.200} />}
                {n.k === 'q' && <Ico s={16} v={16}><path d="M1 15V1h10v5M4 1v14h3M7 1v8" stroke="#3b3a39" strokeWidth="1.200" /><circle cx="12" cy="11" r="4.500" fill="#252423" /><text x="12" y="14" fontSize="7" fill="#fff" textAnchor="middle" fontFamily="Roboto">?</text></Ico>}
              </div>
              <span className="ml-[7px] whitespace-nowrap">{n.t}</span>
            </div>
          );
        })}
      </div>
      <div className="absolute left-[210px] top-[100px] w-[10px] h-[417px] bg-[#c8c6c4]" />
    </div>
  );
}

function Status() {
  return (
    <div className="h-[31px] bg-[#f3f2f1] border-t border-[#e1dfdd] border-b border-b-[#c0bfbb] flex items-center text-[14px] text-[#484644] shrink-0">
      <span className="ml-[5px]">Page 3 of 3</span>
      <div className="ml-auto flex items-center">
        <Minus size={8} strokeWidth={3} />
        <div className="ml-[5px] w-[125px] h-[1px] bg-[#605e5c] relative">
          <div className="absolute left-[41px] -top-[6px] w-[5px] h-[13px] bg-[#605e5c]" />
          <div className="absolute left-[60px] -top-[3px] w-[1px] h-[7px] bg-[#605e5c]" />
        </div>
        <Plus size={14} strokeWidth={1.500} className="ml-[4px]" />
        <span className="ml-[13px] w-[36px] text-[#605e5c] text-[14.500px]">76%</span>
        <div className="ml-[17px] mr-[22px] w-[20px] h-[16px] border border-[#605e5c] bg-[#f3f2f1]">
          <Ico s={18} v={18}><path d="M3 6V3h3M12 3h3v3M15 11v3h-3M6 14H3v-3" stroke="#605e5c" /></Ico>
        </div>
      </div>
    </div>
  );
}

const tb: { k: string; n: React.ReactNode; dot?: string; bg?: string }[] = [
  { k: 'a', n: <><rect x="6" y="8" width="16" height="22" fill="#1a1a1a" /><rect x="14" y="2" width="14" height="20" fill="#f0f0ee" /><rect x="14" y="8" width="8" height="14" fill="#8a8a8a" /></> },
  { k: 'b', n: <><circle cx="24" cy="9" r="3.500" fill="#7b83eb" /><path d="M18 14h12v11c0 3-3 5-6 4z" fill="#5a62c3" /><circle cx="15" cy="7" r="4" fill="#7b83eb" /><rect x="10" y="12" width="13" height="17" rx="3" fill="#7b83eb" /><rect x="4" y="10" width="13" height="13" fill="#fff" stroke="#ddd" /><path d="M7 13h7M10.500 13v8" stroke="#4b53bc" strokeWidth="2" /></> },
  { k: 'c', dot: 'g', n: <><path d="M1 1h12l3 5h14v28H1z" fill="#f5c518" /><path d="M1 1h12l3 5H1z" fill="#d9a300" /><rect x="9" y="22" width="14" height="8" rx="1" fill="#0f7cc9" /><rect x="11" y="25" width="8" height="2" fill="#0a5a96" /></> },
  { k: 'd', n: <><path d="M1 14L16 1l15 13v19H1z" fill="#35b1e8" /><path d="M4 14h24v8l-12 7-12-7z" fill="#fff" /><path d="M1 33l15-11 15 11z" fill="#0f78d4" /></> },
  { k: 'e', n: <><path d="M10 3c4-3 8 0 8 3v14L8 30c-2-1-5-3-5-6V10z" fill="#5b7fe8" /><path d="M18 9l8 5c2 2 2 8 0 10L14 32c-3 1-6 0-6-2l14-9z" fill="#b356d3" /></> },
  { k: 'f', n: <><circle cx="16" cy="16" r="14" fill="#0c9fd8" /><path d="M6 12c2-8 14-10 20-4 3 3 4 7 3 10H13c0 4 5 6 8 5-4 4-15 2-15-6z" fill="#37c48d" /><circle cx="15" cy="20" r="4" fill="#b6b6b6" /><path d="M9 32c0-5 3-7 6-7s6 2 6 6z" fill="#8a8a8a" /></> },
  { k: 'g', n: <><circle cx="16" cy="17" r="14" fill="#ff7139" /><circle cx="17" cy="18" r="8" fill="#7542e5" /><path d="M20 3c5 3 10 8 10 15S23 31 16 31C9 31 3 25 3 18c3 5 8 6 12 4-6 0-5-7-1-8 0-4 2-8 6-11z" fill="#ff980e" /></> },
  { k: 'h', n: <><path d="M10 8c0-8 12-8 12 0" stroke="#2ba3c8" strokeWidth="2.500" /><rect x="3" y="7" width="26" height="26" rx="3" fill="#10426f" /><rect x="10" y="13" width="5.500" height="5.500" fill="#f25022" /><rect x="16.500" y="13" width="5.500" height="5.500" fill="#7fba00" /><rect x="10" y="19.500" width="5.500" height="5.500" fill="#00a4ef" /><rect x="16.500" y="19.500" width="5.500" height="5.500" fill="#ffb900" /></> },
  { k: 'i', n: <><rect x="1" y="1" width="30" height="30" fill="#ef443b" /><path d="M12 9l7 7-7 7-6-7z" fill="#fff" /><path d="M20 10l6 6-6 6-2-2 4-4-4-4z" fill="#fff" /></> },
  { k: 'j', n: <><circle cx="16" cy="16" r="16" fill="#fff" /><path d="M16 7a9 9 0 0 0-8 13l-1 5 5-1a9 9 0 1 0 4-17z" fill="#fff" stroke="#25a244" strokeWidth="2" /><path d="M12 11c-2 4 4 10 8 9l1-3-3-1-1 1c-2-1-2-2-3-3l1-1-1-3z" fill="#25a244" /></> },
  { k: 'k', dot: 'r', bg: 'bg-[#fde8e8]', n: <><circle cx="15" cy="19" r="13" fill="#34a853" /><path d="M15 6a13 13 0 0 1 12 8H15a5 5 0 0 0-5 4L5 11a13 13 0 0 1 10-5z" fill="#ea4335" /><path d="M27 14a13 13 0 0 1-13 18l5-9a5 5 0 0 0 1-9z" fill="#fbbc04" /><circle cx="15" cy="19" r="5.500" fill="#4285f4" stroke="#fff" /><circle cx="24" cy="9" r="9" fill="#e8487f" /><text x="24" y="12.500" fontSize="10" fill="#fff" textAnchor="middle" fontFamily="Roboto">P</text></> },
  { k: 'l', dot: 'g', n: <path d="M16 1c8 0 13 6 13 14 0 5-1 9-4 12-1 3-3 4-5 4-1-2-1-4 0-6h-5c-2 2-3 4-5 6-4-1-7-6-8-12C1 9 7 1 16 1z" fill="#0ea1e0" /> },
  { k: 'm', dot: 'b', bg: 'bg-[#f1efe6]', n: <><rect x="7" y="18" width="10" height="14" fill="#f2d45c" /><rect x="11" y="10" width="11" height="22" fill="#f5c518" /><rect x="19" y="1" width="10" height="31" fill="#c48a09" /><path d="M5 1h14v9h-8v8H7v14H5z" fill="#0f7cc9" /></> },
  { k: 'n', dot: 'g', n: <><rect x="1" y="1" width="30" height="32" rx="3" fill="#23597a" /><path d="M8 8c5 0 9 3 11 8 1 3 3 5 5 6-4 0-7-2-9-5M23 5l1 7" stroke="#cfe3ee" strokeWidth="1.300" fill="none" /></> },
];

function Taskbar() {
  return (
    <div className="h-[59px] bg-[#e4e1cd] flex items-center relative shrink-0">
      <div className="w-[274px] shrink-0 pl-[22px] relative">
        <svg width="40" height="44" viewBox="0 0 40 44" fill="none"><path d="M7 4l5 24M12 4l4 24M17 4l2 24" stroke="#e8a55b" strokeWidth="2.500" /><circle cx="17" cy="34" r="6.500" fill="#e23d30" /></svg>
        <div className="absolute left-[40px] top-[-4px] w-[20px] h-[20px] rounded-full bg-[#c0281f] text-white text-[11px] flex items-center justify-center">1</div>
      </div>
      <div className="w-[56px] shrink-0 flex justify-center">
        <svg width="30" height="30" viewBox="0 0 30 30"><defs><linearGradient id="w" x1="0" y1="0" x2="1" y2="1"><stop offset="0" stopColor="#6fd0f7" /><stop offset="1" stopColor="#0a78d8" /></linearGradient></defs><rect width="14.500" height="14.500" fill="url(#w)" /><rect x="15.500" width="14.500" height="14.500" fill="url(#w)" /><rect y="15.500" width="14.500" height="14.500" fill="url(#w)" /><rect x="15.500" y="15.500" width="14.500" height="14.500" fill="url(#w)" /></svg>
      </div>
      <div className="ml-[5px] w-[273px] h-[38px] rounded-full bg-[#f6f4e9] border border-[#d6d3c2] flex items-center pl-[14px] text-[17px] text-[#484644] shrink-0 relative overflow-hidden">
        <svg width="20" height="20" viewBox="0 0 20 20" fill="none"><circle cx="9" cy="9" r="6.500" stroke="#1f1f1f" strokeWidth="2" /><path d="M13.500 13.500l5 5" stroke="#1f1f1f" strokeWidth="2" /></svg>
        <span className="ml-[11px]">Search</span>
        <svg className="absolute right-[6px] top-[1px]" width="60" height="36" viewBox="0 0 60 36"><ellipse cx="32" cy="31" rx="27" ry="5" fill="#7ca33f" /><path d="M16 4c3-3 7-2 8 1l8 13 12 1c3 1 3 4 3 7l1 6h-3l-2-7-10 1-1 6h-3l-2-7c-4-2-6-7-7-13l-5-2z" fill="#d9a860" /><path d="M26 12l4 7M30 10l-2 5" stroke="#6b4a2b" strokeWidth="1.500" fill="none" /></svg>
      </div>
      <div className="ml-[2.500px] flex shrink-0">
        {tb.map(i => (
          <div key={i.k} className={`w-[55.300px] h-[50px] flex items-center justify-center relative rounded-[3px] ${i.bg || ''}`}>
            <svg width="32" height="34" viewBox="0 0 32 34" fill="none" className="overflow-visible">{i.n}</svg>
            {i.dot === 'g' && <span className="absolute bottom-[-4px] w-[6px] h-[6px] rounded-full bg-[#6b6b6b]" />}
            {i.dot === 'r' && <span className="absolute bottom-[-4px] w-[7px] h-[6px] rounded-full bg-[#b3261e]" />}
            {i.dot === 'b' && <span className="absolute bottom-[-4px] w-[18px] h-[4px] rounded-full bg-[#0f78d4]" />}
          </div>
        ))}
      </div>
      <div className="ml-[79px] flex items-center shrink-0 text-[#1f1f1f]">
        <ChevronUp size={18} strokeWidth={1.700} />
        <svg className="ml-[18px]" width="24" height="26" viewBox="0 0 24 26"><circle cx="10" cy="11" r="8" fill="#777" /><circle cx="16" cy="17" r="6.500" fill="#d32f3a" /><path d="M13.500 14.500l5 5M18.500 14.500l-5 5" stroke="#fff" strokeWidth="1.300" /></svg>
        <svg className="ml-[18px]" width="22" height="26" viewBox="0 0 22 26" fill="none"><path d="M3 11a8 8 0 0 1 14-5M4 20a8 8 0 0 0 6 3" stroke="#1f1f1f" strokeWidth="1.400" /><path d="M17 1v6h-6M3 25v-6h5" stroke="#1f1f1f" strokeWidth="1.300" /><circle cx="15" cy="17" r="6" fill="#f28c0f" /></svg>
        <div className="ml-[11px] w-[52px] text-center text-[14.500px] leading-[19px]">ENG<br />INTL</div>
        <svg className="ml-[10px]" width="22" height="20" viewBox="0 0 22 20" fill="none"><path d="M1 7c6-6 14-6 20 0M4 10c4-4 10-4 14 0M7 13c2-2 6-2 8 0" stroke="#1f1f1f" strokeWidth="1.500" /><circle cx="11" cy="17" r="1.500" fill="#1f1f1f" /></svg>
        <svg className="ml-[6px]" width="22" height="20" viewBox="0 0 22 20" fill="none"><path d="M1 7h4l5-5v16l-5-5H1z" stroke="#1f1f1f" strokeWidth="1.200" /><path d="M13 7c1 2 1 4 0 6M16 4c2 4 2 8 0 12" stroke="#1f1f1f" strokeWidth="1.200" /></svg>
        <svg className="ml-[10px]" width="22" height="22" viewBox="0 0 22 22" fill="none"><rect x="1" y="7" width="17" height="11" rx="2" stroke="#1f1f1f" strokeWidth="1.500" /><rect x="3" y="9" width="8" height="7" fill="#1f1f1f" /><path d="M19 10v5" stroke="#1f1f1f" strokeWidth="2" /><path d="M6 1l-1 6h3l-2 5" stroke="#1f1f1f" strokeWidth="1.300" /></svg>
        <div className="ml-[3px] w-[93px] text-right text-[15px] leading-[19px]">22:24<br />24-04-2024</div>
        <svg className="ml-[11px]" width="18" height="24" viewBox="0 0 18 24"><path d="M9 1c4 0 6 3 6 7v6l2 4H1l2-4V8c0-4 2-7 6-7z" fill="#0f5cb8" /><circle cx="9" cy="21" r="2.500" fill="#0f5cb8" /></svg>
        <div className="ml-[22px] relative w-[32px] h-[40px]">
          <svg width="32" height="32" viewBox="0 0 32 32"><path d="M9 2h12l-6 27c-6 1-13-3-13-10C2 11 5 4 9 2z" fill="#2fb4e9" /><path d="M21 2c3 1 6 5 6 10l-9 4z" fill="#8ad17a" /><path d="M15 12h14c2 2 1 12-3 15-3 2-7 2-11 1z" fill="#c36fdc" /></svg>
          <span className="absolute left-[7px] top-[26px] bg-[#f5c518] text-[8px] leading-[11px] px-[2px] rounded-[2px] font-bold text-[#252423]">PRE</span>
        </div>
      </div>
    </div>
  );
}

export default function App() {
  return (
    <div className="w-[1920px] h-[1080px] overflow-hidden flex flex-col bg-white [font-family:Roboto,'Open_Sans',sans-serif]">
      <TitleBar />
      <Ribbon />
      <div className="flex h-[790px] shrink-0">
        <Rail />
        <div className="w-[1375px] shrink-0 flex flex-col">
          <Canvas />
          <Tabs />
        </div>
        <Filters />
        <Viz />
        <DataPane />
      </div>
      <Status />
      <Taskbar />
    </div>
  );
}
